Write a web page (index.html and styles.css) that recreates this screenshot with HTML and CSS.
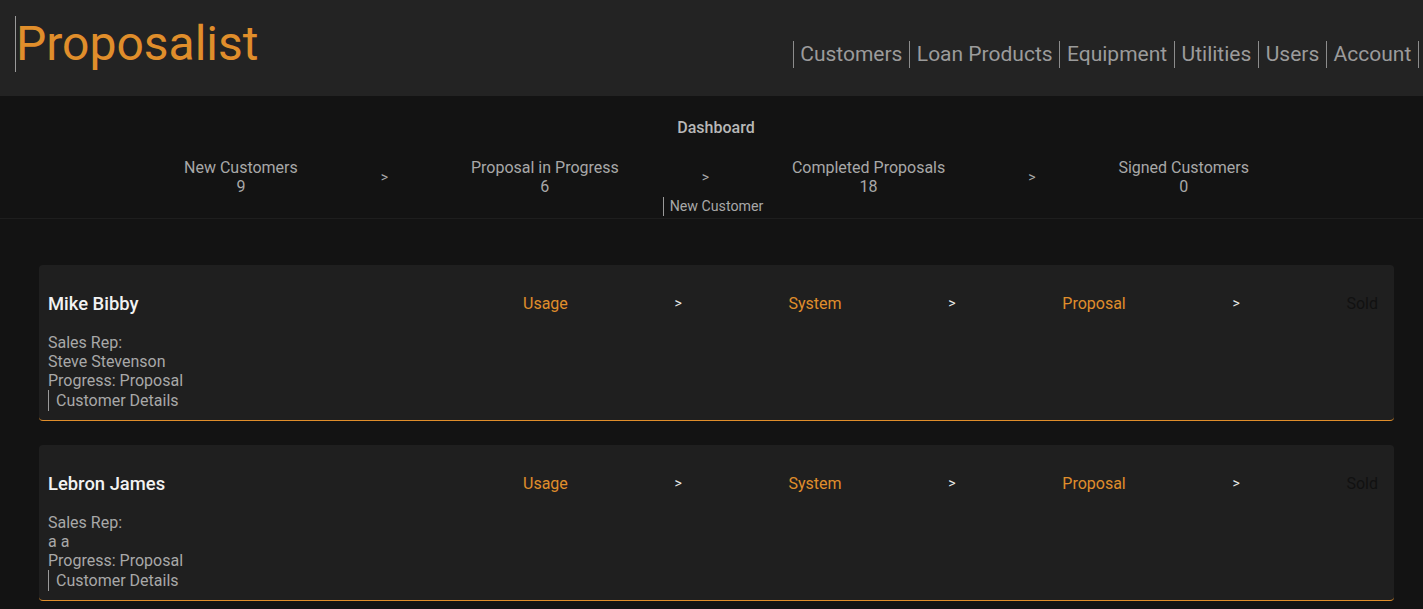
FILE: index.html
```html
<!DOCTYPE html>
<html>
<head>
<meta charset="utf-8">
<title>Proposalist</title>
<link rel="stylesheet" href="styles.css">
</head>
<body>
<header class="topbar">
  <div class="logo">Proposalist</div>
  <nav class="nav">
    <a class="nav-item">Customers</a>
    <a class="nav-item">Loan Products</a>
    <a class="nav-item">Equipment</a>
    <a class="nav-item">Utilities</a>
    <a class="nav-item">Users</a>
    <a class="nav-item last">Account</a>
  </nav>
</header>
<section class="dashboard">
  <div class="dash-title">Dashboard</div>
  <div class="stats">
    <div class="stat"><div>New Customers</div><div>9</div></div>
    <div class="arrow">&gt;</div>
    <div class="stat"><div>Proposal in Progress</div><div>6</div></div>
    <div class="arrow">&gt;</div>
    <div class="stat"><div>Completed Proposals</div><div>18</div></div>
    <div class="arrow">&gt;</div>
    <div class="stat"><div>Signed Customers</div><div>0</div></div>
  </div>
  <div class="new-wrap"><a class="new-customer">New Customer</a></div>
</section>
<main class="list">
  <div class="card">
    <div class="card-top">
      <div class="name">Mike Bibby</div>
      <div class="stages">
        <span class="stage done">Usage</span>
        <span class="sep">&gt;</span>
        <span class="stage done">System</span>
        <span class="sep">&gt;</span>
        <span class="stage done">Proposal</span>
        <span class="sep">&gt;</span>
        <span class="stage todo">Sold</span>
      </div>
    </div>
    <div class="info">
      <div>Sales Rep:</div>
      <div>Steve Stevenson</div>
      <div>Progress: Proposal</div>
      <a class="details">Customer Details</a>
    </div>
  </div>
  <div class="card">
    <div class="card-top">
      <div class="name">Lebron James</div>
      <div class="stages">
        <span class="stage done">Usage</span>
        <span class="sep">&gt;</span>
        <span class="stage done">System</span>
        <span class="sep">&gt;</span>
        <span class="stage done">Proposal</span>
        <span class="sep">&gt;</span>
        <span class="stage todo">Sold</span>
      </div>
    </div>
    <div class="info">
      <div>Sales Rep:</div>
      <div>a a</div>
      <div>Progress: Proposal</div>
      <a class="details">Customer Details</a>
    </div>
  </div>
</main>
</body>
</html>
```
FILE: styles.css
```css
html, body {
  margin: 0;
  padding: 0;
  background: #131313;
  font-family: Roboto, "Liberation Sans", sans-serif;
  color: #a8a8a8;
  overflow: hidden;
}

.topbar {
  height: 96px;
  background: #232323;
  display: flex;
  justify-content: space-between;
  align-items: flex-start;
  box-sizing: border-box;
}

.logo {
  margin: 16px 0 0 15px;
  border-left: 1px solid #9a9a9a;
  padding-left: 0;
  font-size: 48px;
  line-height: 56px;
  color: #e08e2b;
}

.nav {
  display: flex;
  margin: 41px 4px 0 0;
}

.nav-item {
  border-left: 1px solid #8c8c8c;
  padding: 0 6.7px;
  font-size: 21px;
  line-height: 27px;
  color: #9b9b9b;
}

.nav-item.last {
  border-right: 1px solid #8c8c8c;
}

.dashboard {
  border-bottom: 1px solid #1e1e1e;
  padding: 22px 0 2px;
}

.dash-title {
  text-align: center;
  font-size: 16px;
  font-weight: 500;
  line-height: 19px;
  color: #b8b8b8;
  padding-left: 9px;
}

.stats {
  display: flex;
  justify-content: space-between;
  align-items: center;
  padding: 0 174px 0 184px;
  margin-top: 21px;
  font-size: 16px;
  line-height: 19px;
}

.stat {
  text-align: center;
  color: #a8a8a8;
}

.arrow {
  color: #a8a8a8;
  font-size: 14px;
}

.new-wrap {
  display: flex;
  justify-content: center;
  margin-top: 1px;
  padding-left: 3px;
}

.new-customer {
  border-left: 1px solid #9a9a9a;
  padding-left: 6px;
  font-size: 14.2px;
  line-height: 19px;
  color: #a8a8a8;
}

.list {
  padding: 46px 29px 0 39px;
  display: flex;
  flex-direction: column;
  gap: 24px;
}

.card {
  background: #1f1f1f;
  border-radius: 4px;
  border-bottom: 1px solid #e08e2b;
  padding: 28px 9px 10px;
}

.card-top {
  display: flex;
  align-items: center;
  line-height: 21px;
}

.name {
  width: 475px;
  font-size: 18.4px;
  font-weight: 500;
  color: #f2f2f2;
}

.stages {
  flex: 1;
  display: flex;
  justify-content: space-between;
  margin-right: 7px;
  font-size: 16px;
}

.stage.done {
  color: #e08e2b;
}

.stage.todo {
  color: #111111;
}

.sep {
  color: #e8e8e8;
  font-size: 14px;
}

.info {
  margin-top: 19px;
  font-size: 16px;
  line-height: 19px;
  color: #a8a8a8;
  display: flex;
  flex-direction: column;
  align-items: flex-start;
}

.details {
  border-left: 1px solid #9a9a9a;
  padding-left: 7px;
  line-height: 20px;
  padding-top: 1px;
  margin-bottom: -1px;
}
```
